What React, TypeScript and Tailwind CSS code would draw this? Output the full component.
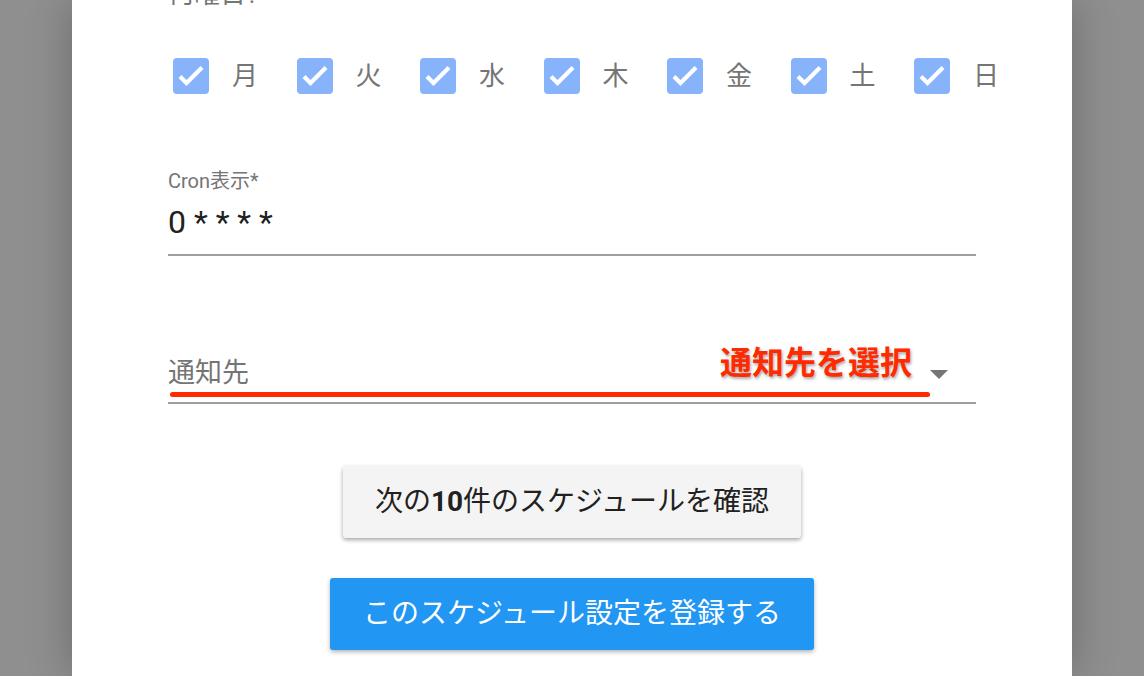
const days = ["月", "火", "水", "木", "金", "土", "日"];

const jp = "font-['Roboto','Noto_Sans_CJK_JP',sans-serif]";

function CheckBox() {
  return (
    <svg width="36" height="36" viewBox="0 0 36 36" aria-hidden>
      <rect x="0" y="0" width="36" height="36" rx="4" fill="#87b3fb" />
      <path d="M7 18.5l6.5 6.5L29 9.5" fill="none" stroke="#fff" strokeWidth="4.2" />
    </svg>
  );
}

export default function App() {
  return (
    <div className={`flex h-[676px] w-full justify-center overflow-hidden bg-[#8f8f8f] ${jp}`}>
      <div className="relative h-full w-[1000px] shrink-0 overflow-hidden bg-white shadow-[0_0_40px_rgba(0,0,0,0.25)]">
        <div className="pl-[96px] pr-[96px]">
          <p className="-mt-[22px] text-[26px] leading-[32px] text-[#757575]">何曜日?</p>

          <div className="mt-[48px] flex">
            {days.map((d) => (
              <label key={d} className="flex h-[36px] w-[123.5px] shrink-0 items-center">
                <span className="ml-[5px] flex">
                  <CheckBox />
                </span>
                <span className="ml-[23px] text-[26px] leading-none text-[#757575]">{d}</span>
              </label>
            ))}
          </div>

          <div className="mt-[75px] border-b-2 border-[#9e9e9e] pb-[13px]">
            <div className="text-[20px] leading-[24px] text-[#757575]">Cron表示*</div>
            <div className="mt-[10px] text-[32px] leading-[38px] text-[#212121]">0 * * * *</div>
          </div>

          <div className="relative mt-[100px] flex items-end border-b-2 border-[#9e9e9e] pb-[12px]">
            <span className="text-[27px] leading-[34px] text-[#757575]">通知先</span>
            <svg className="absolute right-[28px] top-[14px]" width="18" height="10" viewBox="0 0 18 10" aria-hidden>
              <path d="M0 0h18L9 9z" fill="#757575" />
            </svg>
            <span
              className="absolute left-[552px] top-[-13px] text-[32px] font-bold leading-[40px] text-[#ff2a00] [paint-order:stroke_fill] [-webkit-text-stroke:5px_#fff] [text-shadow:1px_2px_3px_rgba(0,0,0,0.35)]"
            >
              通知先を選択
            </span>
            <span className="absolute bottom-[5px] left-[2px] h-[5px] w-[760px] rounded-full bg-[#ff2a00]" />
          </div>

          <div className="mt-[62px] flex flex-col items-center">
            <button className="flex h-[72px] w-[458px] items-center justify-center rounded-[3px] bg-[#f4f4f4] text-[28px] text-[#212121] shadow-[0_2px_4px_rgba(0,0,0,0.35)]">
              次の<b className="font-bold">10</b>件のスケジュールを確認
            </button>
            <button className="mt-[40px] flex h-[72px] w-[484px] items-center justify-center rounded-[3px] bg-[#2196f3] text-[28px] text-white shadow-[0_2px_4px_rgba(0,0,0,0.3)]">
              このスケジュール設定を登録する
            </button>
          </div>
        </div>
      </div>
    </div>
  );
}
